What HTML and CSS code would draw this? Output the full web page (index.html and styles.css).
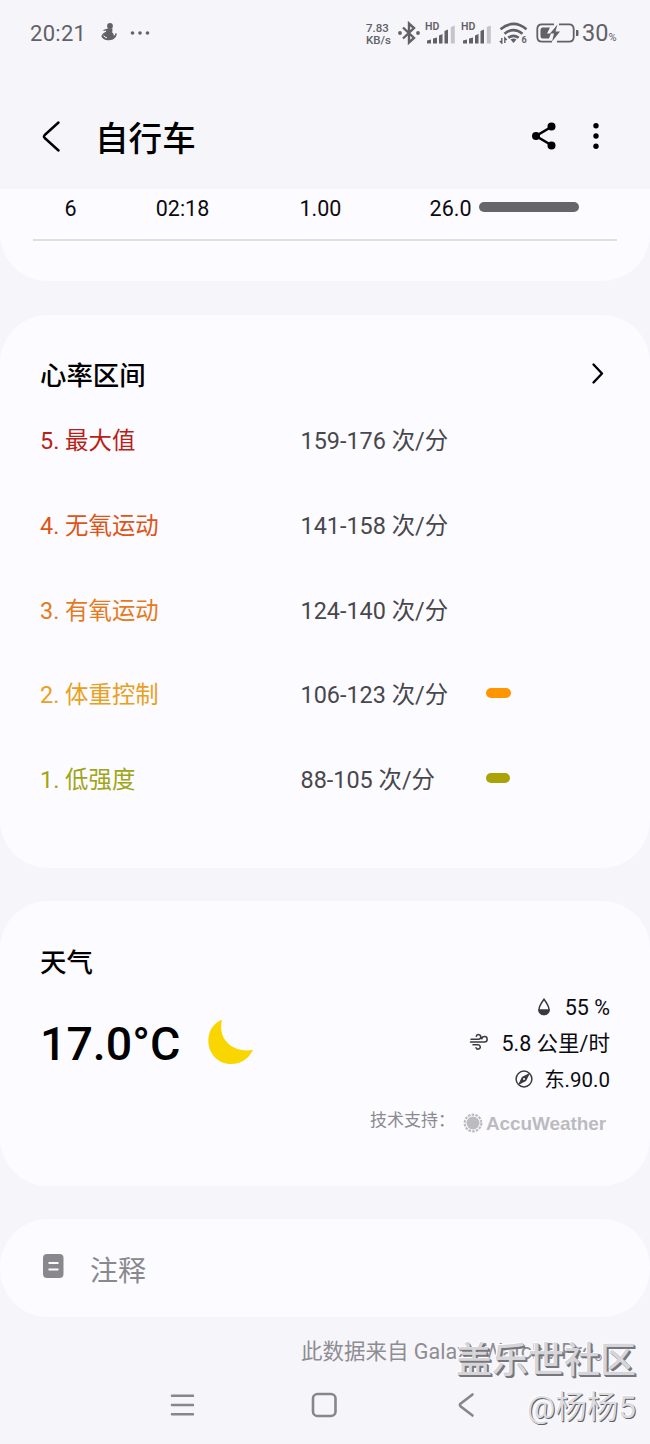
FILE: index.html
```html
<!DOCTYPE html>
<html lang="zh-CN">
<head>
<meta charset="utf-8">
<title>自行车</title>
<link rel="stylesheet" href="styles.css">
</head>
<body>
<div class="screen">
  <header class="status">
    <span class="clock">20:21</span>
    <svg class="person" width="16" height="18" viewBox="0 0 16 18"><circle cx="9" cy="3" r="2.900"/><path d="M6.500 5.500h5L11.200 9.500c1.300 1 1.800 2.300 1.600 3.500 1-.6 1.400-1.500 1.700-2.700l1.300.3c-.4 4-3.200 6.700-7.800 6.700C4 17.300.8 15.500.4 12.700 1.500 10.700 3 9.500 5 8.700l.2-1.200-2.500.6-.5-1.100z"/><path d="M2.600 12.500q1 2 3.400 2.300" fill="none" stroke="#f6f5fa"/></svg>
    <svg class="dots" width="20" height="4" viewBox="0 0 20 4"><circle cx="2.500" cy="2" r="1.800"/><circle cx="10" cy="2" r="1.800"/><circle cx="17.500" cy="2" r="1.800"/></svg>
    <span class="speed"><span>7.83</span><span>KB/s</span></span>
    <svg class="bt" width="22" height="24" viewBox="0 0 22 24"><path d="M5 6.500 16 17l-5 4.500v-19L16 7 5 17.500"/><circle cx="2" cy="12" r="1.900"/><circle cx="20" cy="12" r="1.900"/></svg>
    <span class="signal"><b>HD</b><svg width="29" height="19" viewBox="0 0 29 19"><path d="M1 18.500v-3l4-1v4zM7 18.500v-5l4-1v6zM13 18.500v-8l3.500-1.500v9.500zM18.500 18.500V6L22 4.500v14z"/><path class="pale" d="M24.800 18.500V2l4-1.500v18z"/></svg></span>
    <span class="signal"><b>HD</b><svg width="29" height="19" viewBox="0 0 29 19"><path d="M1 18.500v-3l4-1v4zM7 18.500v-5l4-1v6zM13 18.500v-8l3.500-1.500v9.500zM18.500 18.500V6L22 4.500v14z"/><path class="pale" d="M24.800 18.500V2l4-1.500v18z"/></svg></span>
    <svg class="wifi" width="29" height="22" viewBox="0 0 29 22"><path class="arc" d="M1.500 7.200q13-10.500 26 0M5.500 11.700q9-7 18 0M9.300 15.800q5.200-3.800 10.400 0"/><path d="m11.500 17.500q3-1.800 6 0l-3 3.500z"/><path class="arrows" d="M2.800 16v5l-2-2M5.800 21v-5l2 2"/><text x="22.500" y="21">6</text></svg>
    <svg class="battery" width="43" height="20" viewBox="0 0 43 20"><path d="M18 1.300H6Q1.300 1.300 1.300 6v8q0 4.700 4.700 4.700h10M23 1.300h10q4.700 0 4.700 4.700v8q0 4.700-4.700 4.700H21" fill="none" stroke-width="1.800"/><path d="M6.500 4.500H14l-3 6h4l-2 5H6.500Q4.500 15.500 4.500 13V7q0-2.500 2-2.500zM21.500 1.500 14 10.500h4l-2 8 8-10h-4.500zM40 7h1.500q1 0 1 1v4q0 1-1 1H40z"/></svg>
    <span class="percent">30<small>%</small></span>
  </header>

  <div class="appbar">
    <svg class="back" width="20" height="32" viewBox="0 0 20 32"><path d="M17.500 2.500 3.700 15q-1.500 1.500 0 3l13.800 12.500"/></svg>
    <h1>自行车</h1>
    <svg class="share" width="26" height="28" viewBox="0 0 26 28"><path d="M21 4.500 5 14l16 9.500"/><circle cx="5" cy="14" r="4"/><circle cx="20.500" cy="4.500" r="4"/><circle cx="20.500" cy="23.500" r="4"/></svg>
    <svg class="more" width="8" height="28" viewBox="0 0 8 28"><circle cx="4" cy="3.700" r="2.700"/><circle cx="4" cy="14" r="2.700"/><circle cx="4" cy="24.300" r="2.700"/></svg>
  </div>

  <section class="card lap">
    <div class="lap-row"><span class="index">6</span><span>02:18</span><span>1.00</span><span class="pace">26.0</span><i></i></div>
  </section>

  <section class="card zones">
    <div class="card-head"><h2>心率区间</h2><svg width="16" height="24" viewBox="0 0 16 24"><path d="m3.500 2.500 8.500 9L3.500 20.500"/></svg></div>
    <div class="zone"><span class="max">5. 最大值</span><span>159-176 次/分</span></div>
    <div class="zone"><span class="anaerobic">4. 无氧运动</span><span>141-158 次/分</span></div>
    <div class="zone"><span class="aerobic">3. 有氧运动</span><span>124-140 次/分</span></div>
    <div class="zone"><span class="weight">2. 体重控制</span><span>106-123 次/分</span><i></i></div>
    <div class="zone"><span class="low">1. 低强度</span><span>88-105 次/分</span><i class="green"></i></div>
  </section>

  <section class="card weather">
    <h2>天气</h2>
    <div class="conditions">
      <span class="temp">17.0°C</span>
      <svg class="moon" width="46" height="46" viewBox="0 0 46 46"><path d="M14 .8C5 4.500.3 12.500.3 21.500c0 13 9.800 23.500 22.700 23.500 10.500 0 18-5.500 22-14.200C27 34.500 9 22 14 .8z"/></svg>
      <div class="metrics">
        <div><svg width="14" height="18" viewBox="0 0 14 18"><path d="M7 1.200Q2 8 2 11.500a5 5 0 0 0 10 0Q12 8 7 1.200z"/><path class="solid" d="M2 12h10a5 4.500 0 0 1-10 0z"/></svg><span>55 %</span></div>
        <div class="wind"><svg width="20" height="18" viewBox="0 0 20 18"><path d="M2 6.200h7.500a2.300 2.300 0 1 0-2.200-3M1.500 9h14a2.700 2.700 0 1 0-2.700-3.200M4 11.700h5a2.200 2.200 0 1 1-2 3"/></svg><span>5.8 公里/时</span></div>
        <div class="heading"><svg width="18" height="18" viewBox="0 0 18 18"><circle cx="9" cy="9" r="7.900"/><path class="solid" d="m13.500 4.500-3 6-6 3 3-6z"/><circle class="hole" cx="9" cy="9" r="1"/></svg><span>东.90.0</span></div>
      </div>
    </div>
    <div class="credit"><span>技术支持：</span><svg width="20" height="20" viewBox="0 0 20 20"><circle cx="10" cy="10" r="6.500"/><circle class="rays" cx="10" cy="10" r="8.300"/></svg><b>AccuWeather</b></div>
  </section>

  <section class="card note">
    <svg width="21" height="24" viewBox="0 0 21 24"><rect width="20.500" height="24" rx="4"/><path d="M5.500 9h10M5.500 15.500h10"/></svg>
    <span>注释</span>
  </section>

  <footer>
    <p>此数据来自 Galaxy Watch5 Pro。</p>
    <nav>
      <svg width="24" height="24" viewBox="0 0 24 24"><path d="M2 2.800h21M2 12h21M2 21.200h21"/></svg>
      <svg width="26" height="26" viewBox="0 0 26 26"><rect x="2" y="2" width="22.500" height="22" rx="4.500"/></svg>
      <svg width="18" height="26" viewBox="0 0 18 26"><path d="M14.500 2.500 2.500 11.800q-1.300 1.200 0 2.400l12 9.300"/></svg>
    </nav>
  </footer>
  <div class="watermark"><strong>盖乐世社区</strong><span>@杨杨5</span></div>
</div>
</body>
</html>
```
FILE: styles.css
```css
* { box-sizing: border-box; }
body { margin: 0; background: #f6f5fa; }
h1, h2, p { margin: 0; font-weight: 500; }
svg { display: block; flex: none; }
.screen {
  position: relative;
  width: 650px;
  height: 1444px;
  overflow: hidden;
  font-family: Roboto, "Noto Sans CJK SC", sans-serif;
  color: #0b0b0f;
  display: flex;
  flex-direction: column;
}

.status { height: 66px; padding-left: 30px; display: flex; align-items: center; color: #626167; fill: #626167; flex: none; }
.clock { width: 70px; font-size: 22px; letter-spacing: .3px; }
.person { margin: -2px 13px 0 1px; }
.dots { margin-top: -1px; }
.speed { width: 27px; margin: 3px 0 0 216px; display: flex; flex-direction: column; font-size: 11.500px; line-height: 11.500px; font-weight: 500; white-space: nowrap; }
.bt { margin: -1px 0 0 5px; }
.bt path { fill: none; stroke: #626167; stroke-width: 2.400; }
.signal { position: relative; width: 30px; height: 22px; margin-left: 6px; padding-top: 3px; }
.signal b { position: absolute; left: -1px; top: 0; font-size: 10.500px; line-height: 10px; font-weight: 600; }
.signal .pale { fill: #c5c4ca; }
.wifi { margin-left: 7px; }
.wifi .arc { fill: none; stroke: #626167; stroke-width: 2.600; }
.wifi .arrows { fill: none; stroke: #626167; stroke-width: 1.400; }
.wifi text { font: 700 9px Roboto, sans-serif; }
.battery { margin-left: 8px; }
.battery path:first-child { stroke: #626167; }
.percent { margin-left: 3px; font-size: 23.500px; white-space: nowrap; }
.percent small { font-size: 11px; }

.appbar { height: 123px; padding: 18px 50px 0 41px; display: flex; align-items: center; fill: #000; flex: none; }
.appbar svg { margin-bottom: 1px; }
.back path, .card-head path { fill: none; stroke: #000; stroke-width: 2.400; stroke-linecap: round; stroke-linejoin: round; }
.appbar h1 { margin: 6px auto 0 34px; font-size: 33.600px; line-height: 46px; color: #000; }
.share path { fill: none; stroke: #000; stroke-width: 2.600; }
.appbar .more { margin-left: 35px; }

.card { background: #fcfbff; border-radius: 48px; flex: none; }
h2 { font-size: 26.400px; line-height: 36px; color: #000; }
.lap { height: 92px; border-radius: 0 0 48px 48px; padding: 0 33px; }
.lap-row { height: 52px; padding-bottom: 10px; border-bottom: 2px solid #dfdee3; display: grid; grid-template-columns: 57.500px 184px 92px 112px 100px; align-items: center; font-size: 21.500px; line-height: 26px; }
.lap-row span { text-align: center; }
.lap-row .index { text-align: left; padding-left: 31.500px; }
.lap-row .pace { text-align: right; padding-right: 7px; }
.lap-row i { width: 100px; height: 10px; margin-top: -5px; border-radius: 5px; background: #66656a; }

.zones { height: 553px; margin-top: 34px; padding: 43px 40px 0; }
.card-head { display: flex; justify-content: space-between; align-items: center; height: 36px; margin-bottom: 6px; }
.card-head svg { margin: -4px 4px 0 0; }
.zone { height: 84.800px; display: grid; grid-template-columns: 260.500px 185.500px 1fr; align-items: start; font-size: 23.400px; line-height: 82.400px; color: #48474c; white-space: nowrap; }
.zone i { width: 25px; height: 10px; margin-top: 34px; border-radius: 5px; background: #ff9500; }
.zone i.green { width: 24px; background: #aaa305; }
.max { color: #ba1e16; }
.anaerobic { color: #dd5517; }
.aerobic { color: #e57a1c; }
.weight { color: #e9a020; }
.low { color: #a0a516; }

.weather { height: 285px; margin-top: 33px; padding: 44px 40px 0; }
.conditions { height: 107px; margin-top: 9px; display: flex; align-items: center; }
.temp { width: 168px; font-size: 46.500px; line-height: 54px; font-weight: 500; white-space: nowrap; color: #000; }
.moon { margin-top: -3px; fill: #f9d600; }
.metrics { margin-left: auto; }
.metrics div { height: 35.700px; display: flex; align-items: center; justify-content: flex-end; font-size: 21.500px; line-height: 30px; }
.metrics svg { margin: -2px 14px 0 0; fill: none; stroke: #3b3a3f; stroke-width: 1.500; stroke-linecap: round; }
.metrics .wind svg { margin: -3px 12px 0 0; }
.metrics .heading { font-size: 20.500px; padding-top: 1px; }
.metrics .heading svg { margin-right: 11px; }
.metrics .solid { fill: #3b3a3f; }
.metrics .hole { fill: #fcfbff; stroke: none; }
.credit { height: 30px; margin-top: 11px; padding-left: 330px; display: flex; align-items: center; color: #8b8a90; font-size: 17px; white-space: nowrap; }
.credit span { width: 93px; line-height: 24px; margin-top: -6px; }
.credit svg { fill: #bcbbc0; }
.credit .rays { fill: none; stroke: #bcbbc0; stroke-width: 2.200; stroke-dasharray: 2.600 1.150; }
.credit b { margin: 1px 0 0 3px; font: 700 19px "Liberation Sans", sans-serif; letter-spacing: -.1px; color: #bcbbc0; }

.note { height: 98px; margin-top: 33px; padding: 0 43px; display: flex; align-items: center; font-size: 28px; line-height: 40px; color: #89888d; }
.note svg { margin: -5px 26px 0 0; fill: #89888d; }
.note path { stroke: #fcfbff; stroke-width: 2.200; }
.note span { margin-top: 8px; }

footer { display: flex; flex-direction: column; }
footer p { margin: 19px 0 0 301px; font-size: 21.500px; line-height: 32px; font-weight: 400; color: #8e8d93; white-space: nowrap; }
nav { display: grid; grid-template-columns: 141px 147px 18px; margin: 24px 0 0 170px; align-items: center; fill: none; stroke: #87868b; stroke-width: 2.600; stroke-linecap: round; }

/* Community stamp laid over the page footer */
.watermark { position: absolute; right: 14px; bottom: 15px; display: flex; flex-direction: column; align-items: flex-end; color: #d6d5d9; white-space: nowrap; }
.watermark strong { margin-bottom: 2px; font-size: 36px; line-height: 48px; font-weight: 500; text-shadow: 1px 1px 0 #77767b, 2px 2px 0 #77767b, -1px -1px 0 #fff; }
.watermark span { font-size: 31.500px; line-height: 42px; color: #dddce0; text-shadow: 1px 1px 0 #5f5e63, -1px -1px 0 #fff; }
```
